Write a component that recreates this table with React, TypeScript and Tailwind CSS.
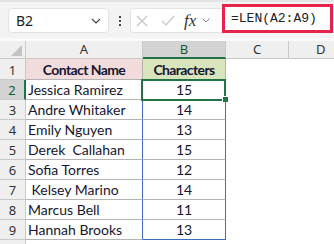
import React from "react";

const rows: [string, string][] = [
  ["Jessica Ramirez", "15"],
  ["Andre Whitaker", "14"],
  ["Emily Nguyen", "13"],
  ["Derek  Callahan", "15"],
  ["Sofia Torres", "12"],
  [" Kelsey Marino", "14"],
  ["Marcus Bell", "11"],
  ["Hannah Brooks", "13"],
];

function Chevron({ color = "#444" }: { color?: string }) {
  return (
    <svg width="10" height="6" viewBox="0 0 10 6" fill="none">
      <polyline points="1,1 5,5 9,1" stroke={color} strokeWidth="1.2" />
    </svg>
  );
}

export default function App() {
  return (
    <div className="w-[334px] h-[244px] overflow-hidden bg-white font-['Lato',sans-serif] text-[#1b1b1b]">
      {/* toolbar */}
      <div className="h-[38px] bg-[#f3f3f3] border-t-2 border-[#e4e4e4] flex items-start pt-[6px] pl-[8px]">
        <div className="w-[101px] h-[25px] rounded-[4px] bg-white border border-[#e3e3e3] flex items-center justify-between pl-[7px] pr-[7px]">
          <span className="text-[14px] font-['Noto_Sans',sans-serif] leading-none text-[#222]">B2</span>
          <Chevron />
        </div>
        <div className="w-[21px] h-[25px] flex flex-col items-center justify-center gap-[2px]">
          <span className="w-[2px] h-[2px] bg-[#444]" />
          <span className="w-[2px] h-[2px] bg-[#444]" />
          <span className="w-[2px] h-[2px] bg-[#444]" />
        </div>
        <div className="w-[92px] h-[25px] rounded-l-[4px] bg-white border border-r-0 border-[#e3e3e3] flex items-center pl-[5px]">
          <svg width="12" height="12" viewBox="0 0 12 12" fill="none">
            <line x1="1" y1="1" x2="11" y2="11" stroke="#c6c6c6" strokeWidth="1.2" />
            <line x1="11" y1="1" x2="1" y2="11" stroke="#c6c6c6" strokeWidth="1.2" />
          </svg>
          <svg className="ml-[13px]" width="14" height="11" viewBox="0 0 14 11" fill="none">
            <polyline points="1,6 5,10 13,1" stroke="#c6c6c6" strokeWidth="1.2" />
          </svg>
          <span className="ml-[9px] font-['Liberation_Serif',serif] italic text-[17px] leading-none text-[#333]">fx</span>
          <span className="ml-[6px] flex items-center">
            <svg width="8" height="5" viewBox="0 0 8 5" fill="none">
              <polyline points="0.5,0.5 4,4 7.5,0.5" stroke="#888" strokeWidth="1" />
            </svg>
          </span>
        </div>
        <div className="-mt-[4px] w-[111px] h-[29px] border-[3px] border-[#e5234b] bg-white flex items-center pl-[6px]">
          <span className="font-['Liberation_Mono',monospace] text-[13px] leading-none text-[#222]">=LEN(A2:A9)</span>
        </div>
      </div>
      <div className="h-[3px] bg-[#fafafa]" />

      {/* column headers */}
      <div className="flex h-[18px] text-[13px] font-['Noto_Sans',sans-serif] text-[#333]">
        <div className="w-[26px] bg-[#efefef] border-r border-b border-[#c9c9c9] flex items-end justify-end pr-[3px] pb-[2px]">
          <svg width="11" height="11" viewBox="0 0 11 11">
            <polygon points="11,0 11,11 0,11" fill="#c3c3c3" />
          </svg>
        </div>
        <div className="w-[117px] bg-[#efefef] border-r border-b border-[#c9c9c9] flex items-center justify-center leading-none">A</div>
        <div className="w-[83px] bg-[#d3d3d3] border-r border-[#c9c9c9] border-b-2 border-b-[#217346] flex items-center justify-center leading-none text-[#185c37]">B</div>
        <div className="w-[63px] bg-[#efefef] border-r border-b border-[#c9c9c9] flex items-center justify-center leading-none">C</div>
        <div className="flex-1 bg-[#efefef] border-b border-[#c9c9c9] flex items-center pl-[27px] leading-none">D</div>
      </div>

      {/* row 1 */}
      <div className="flex h-[21px] text-[14px]">
        <div className="w-[26px] bg-[#efefef] border-r border-b border-[#c9c9c9] flex items-end justify-center pb-[2px] text-[13px] font-['Noto_Sans',sans-serif] text-[#333] leading-none">1</div>
        <div className="w-[117px] bg-[#f2dcdb] border-r border-b border-[#b4b4b4] flex items-end justify-center pb-[2px] font-bold tracking-[-0.6px] leading-none text-[#151530]">Contact Name</div>
        <div className="w-[83px] bg-[#d8e4bc] border-r border-b border-[#b4b4b4] flex items-end justify-center pb-[2px] font-bold tracking-[-0.6px] leading-none text-[#151530]">Characters</div>
        <div className="flex-1" />
      </div>

      {/* data rows */}
      {rows.map(([name, n], i) => {
        const first = i === 0;
        const last = i === rows.length - 1;
        return (
          <div key={i} className="flex h-[20px] text-[14px]">
            <div
              className={
                first
                  ? "w-[26px] bg-[#d3d3d3] border-r-2 border-r-[#217346] border-b border-b-[#c9c9c9] flex items-end justify-center pb-[2px] text-[13px] font-['Noto_Sans',sans-serif] text-[#185c37] leading-none"
                  : "w-[26px] bg-[#efefef] border-r border-b border-[#c9c9c9] flex items-end justify-center pb-[2px] text-[13px] font-['Noto_Sans',sans-serif] text-[#333] leading-none"
              }
            >
              {i + 2}
            </div>
            <div className="w-[117px] border-r border-r-[#3b6fc4] border-b border-b-[#b4b4b4] flex items-end pl-[2px] pb-[2px] leading-none whitespace-pre text-[#151530]">
              {name}
            </div>
            <div
              className={
                "relative w-[83px] border-r border-r-[#3b6fc4] border-b flex items-end justify-center pb-[2px] leading-none text-[#151530] " +
                (last ? "border-b-[#3b6fc4]" : "border-b-[#b4b4b4]")
              }
            >
              {n}
              {first && (
                <>
                  <div className="absolute -left-[2px] -top-[1px] -right-[1px] -bottom-[2px] border-2 border-[#217346]" />
                  <div className="absolute -right-[4px] -bottom-[4px] w-[7px] h-[7px] bg-[#217346] border border-white" />
                </>
              )}
            </div>
            <div className="flex-1" />
          </div>
        );
      })}
      <div className="flex h-[4px]">
        <div className="w-[26px] bg-[#efefef] border-r border-[#c9c9c9]" />
      </div>
    </div>
  );
}
